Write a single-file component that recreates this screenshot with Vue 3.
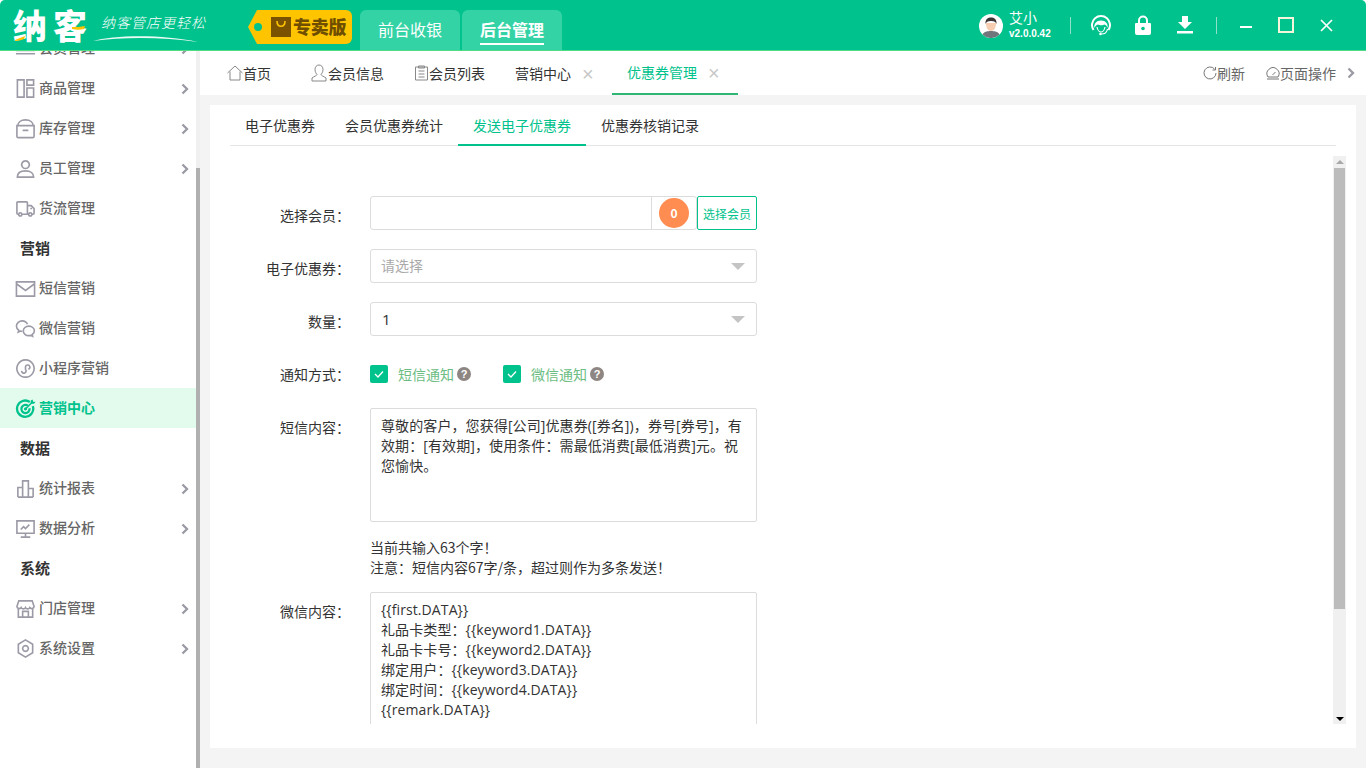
<script setup>
const icons = {
  member: ['M1 13h20M1 16.500h20M1 9h20'],
  goods: ['M2.500 2h7v18h-7zM12.500 2h7v5.500h-7zM12.500 10.500h7V20h-7z'],
  stock: ['M3 8c0-3.500 3-6 8-6s8 2.500 8 6M2 8h18v11a1.500 1.500 0 0 1-1.500 1.500h-15A1.500 1.500 0 0 1 2 19zM8 13h6'],
  staff: ['M11 3a4 4 0 1 1-.01 0M2.500 20c0-4 3-6.500 8.500-6.500s8.500 2.500 8.500 6.500z'],
  truck: ['M13 17V5a1 1 0 0 0-1-1H3a1 1 0 0 0-1 1v11a1 1 0 0 0 1 1h1M8 17h6M13 8h4l3 3v5a1 1 0 0 1-1 1h-1M5.500 15.500a1.700 1.700 0 1 0 .01 0M16 15.500a1.700 1.700 0 1 0 .01 0M16 11h2'],
  mail: ['M1.500 4h19v15h-19zM1.500 6l9.500 7 9.500-7'],
  wechat: ['M13 6.500C12 4 10 3 7.500 3 4.500 3 1.500 5.500 1.500 8.500c0 1.800 1 3.300 2.400 4.300l-.5 2 2.300-1.100c.6.2 1.200.3 1.800.3M14.500 8.500c-3.200 0-5.800 2.200-5.800 5s2.600 5 5.800 5c.7 0 1.300-.1 1.900-.3l2 1-.4-1.900c1.400-.9 2.300-2.300 2.300-3.800 0-2.800-2.600-5-5.800-5zM12.500 13h.1M16.500 13h.1M5.500 7h.1M9.500 7h.1'],
  mini: ['M11 2a9 9 0 1 1-.01 0M7 13.500a2.300 2.300 0 1 0 4-1.500V10a2.300 2.300 0 1 1 3 1.800'],
  chart: ['M3 20V10h5v10M8 20V3h6v17M14 20v-9h5v9M3 20h16'],
  screen: ['M2 3h18v13H2zM11 16v4M6 20h10M6 12l3-3 2 2 4-4'],
  store: ['M4 3h14l2 6a2.500 2.500 0 0 1-4.500 1 2.500 2.500 0 0 1-4.500 0 2.500 2.500 0 0 1-4.500 0A2.500 2.500 0 0 1 2 9zM3.500 10v10h15V10M8 20v-6h6v6'],
  gear: ['M11 2l7.500 4.500v9L11 20l-7.500-4.500v-9zM11 8a3 3 0 1 1-.01 0']
}

const menu = [
  { name: '会员管理', icon: 'member', arrow: true },
  { name: '商品管理', icon: 'goods', arrow: true },
  { name: '库存管理', icon: 'stock', arrow: true },
  { name: '员工管理', icon: 'staff', arrow: true },
  { name: '货流管理', icon: 'truck' },
  { title: '营销' },
  { name: '短信营销', icon: 'mail' },
  { name: '微信营销', icon: 'wechat' },
  { name: '小程序营销', icon: 'mini' },
  { name: '营销中心', active: true },
  { title: '数据' },
  { name: '统计报表', icon: 'chart', arrow: true },
  { name: '数据分析', icon: 'screen', arrow: true },
  { title: '系统' },
  { name: '门店管理', icon: 'store', arrow: true },
  { name: '系统设置', icon: 'gear', arrow: true }
]

const subTabs = ['电子优惠券', '会员优惠券统计', '发送电子优惠券', '优惠券核销记录']
const wxLines = ['{{first.DATA}}', '礼品卡类型：{{keyword1.DATA}}', '礼品卡卡号：{{keyword2.DATA}}', '绑定用户：{{keyword3.DATA}}', '绑定时间：{{keyword4.DATA}}', '{{remark.DATA}}']
</script>

<template>
  <div class="app">
    <header class="topbar">
      <div class="logo">
        <span class="logo-main">纳客</span>
        <svg class="logo-marks" viewBox="0 0 210 50">
          <path d="M15 40c3-1 7-3 10-4l-1 3c-3 1-6 2-9 2z" fill="#ffc400"/>
          <path d="M72 27c4 0 9 0 13-1l-1 3c-4 1-8 1-12 0z" fill="#ffc400"/>
          <path d="M93 41c20-6 70-7 105 1-35-5-75-5-105-1z" fill="#eafaf4"/>
        </svg>
        <span class="logo-slogan">纳客管店更轻松</span>
      </div>
      <div class="badge">
        <i class="badge-dot"></i>
        <svg class="bag" viewBox="0 0 20 20"><path d="M0 0h20v20H0z" fill="#7a5200"/><path d="M6 4c0 7 8 7 8 0" fill="none" stroke="#ffc400" stroke-width="1.600"/></svg>
        <span class="badge-text">专卖版</span>
      </div>
      <div class="mode-tab">前台收银</div>
      <div class="mode-tab current"><span>后台管理</span></div>

      <div class="top-right">
        <svg class="avatar" viewBox="0 0 24 24">
          <circle cx="12" cy="12" r="12" fill="#fff"/>
          <path d="M3.500 20.500c1.500-3 5-3.500 8.500-3.500s7 .5 8.500 3.500A12 12 0 0 1 3.500 20.500z" fill="#71757c"/>
          <path d="M7 9c0 5 2 8 5 8s5-3 5-8z" fill="#f6cdb0"/>
          <path d="M6.500 10C6 5 9 3.500 12 3.500s6 1.500 5.500 6.500c-.8-2-2-3-5.500-3S7.300 8 6.500 10z" fill="#3a3534"/>
        </svg>
        <div class="user">
          <span class="user-name">艾小</span>
          <span class="user-ver">v2.0.0.42</span>
        </div>
        <i class="sep first"></i>
        <svg class="t-icon headset" viewBox="0 0 20 22" fill="none" stroke="#fff">
          <path d="M2.500 15A9 9 0 1 1 17.500 15" stroke-width="2"/>
          <path d="M3.500 13c-1-4 2-7.500 6.500-7.500s7.500 3.500 6.500 7.500c-.5-2-1.500-3-3-3.500-1.500 1-5 1-6.500 0-1.500.5-3 1.500-3.500 3.500z" fill="#fff" stroke="none"/>
          <path d="M6 12c.5 3 2.500 5 4 5s3.500-2 4-5" stroke-width="1.200"/>
          <path d="M16.500 14c-.5 3-3 5-6 5" stroke-width="1.200"/>
          <circle cx="9.500" cy="19" r="1.300" fill="#fff" stroke="none"/>
        </svg>
        <svg class="t-icon lock" viewBox="0 0 16 20">
          <path d="M4 9V5.500a4 4 0 0 1 8 0V9" fill="none" stroke="#fff" stroke-width="2"/>
          <path d="M1 8h14a1 1 0 0 1 1 1v9a2 2 0 0 1-2 2H2a2 2 0 0 1-2-2V9a1 1 0 0 1 1-1z" fill="#fff"/>
          <circle cx="8" cy="13.500" r="1.800" fill="#00c28c"/>
        </svg>
        <svg class="t-icon down" viewBox="0 0 16 18" fill="#fff">
          <path d="M5 0h6v6h4l-7 7-7-7h4zM0 15h16v2.500H0z"/>
        </svg>
        <i class="sep"></i>
        <i class="win-min"></i>
        <i class="win-max"></i>
        <svg class="win-close" viewBox="0 0 13 13"><path d="M1 1l11 11M12 1L1 12" stroke="#fff" stroke-width="1.700"/></svg>
      </div>
    </header>

    <div class="main">
      <aside class="side">
        <nav class="menu">
          <template v-for="item in menu" :key="item.name || item.title">
            <div v-if="item.title" class="menu-title">{{ item.title }}</div>
            <div v-else :class="['menu-item', { active: item.active }]">
              <svg v-if="item.active" class="menu-icon" viewBox="0 0 22 22" fill="none" stroke="#00c28c" stroke-width="2.400">
                <path d="M15.500 4.200a8.500 8.500 0 1 0 3.200 4.300"/>
                <path d="M13.500 8a4.300 4.300 0 1 0 1.700 2.700"/>
                <circle cx="11" cy="11.500" r="1.200" fill="#00c28c" stroke-width="1"/>
                <path d="M11 11.500l7-7" stroke-width="1.600"/>
                <path d="M16.500 2.500v3.500H20l1.500-2H19l-.5-2.500z" fill="#00c28c" stroke="none"/>
              </svg>
              <svg v-else class="menu-icon" viewBox="0 0 22 22" fill="none" stroke="#9c9aa6" stroke-width="1.700">
                <path v-for="d in icons[item.icon]" :key="d" :d="d"/>
              </svg>
              <span class="menu-name">{{ item.name }}</span>
              <svg v-if="item.arrow" class="menu-arrow" viewBox="0 0 8 12" fill="none"><path d="M1.500 1.500L6 6l-4.500 4.500" stroke="#9a9aa4" stroke-width="2.300"/></svg>
            </div>
          </template>
        </nav>
        <div class="side-scroll"><div class="side-thumb"></div></div>
      </aside>

      <div class="content">
        <div class="page-tabs">
          <div class="page-tab home">
            <svg class="tab-icon" viewBox="0 0 16 16" fill="none" stroke="#888"><path d="M.500 8L8 1l7.500 7M3 6.500V15h10V6.500"/></svg>首页
          </div>
          <div class="page-tab">
            <svg class="tab-icon wide" viewBox="0 0 18 18" fill="none" stroke="#888"><path d="M9 1c2.500 0 4 2 4 4.500S11.500 10 11 10.500c0 1 3 2 5 3.500v3H2v-3c2-1.500 5-2.500 5-3.500C6.500 10 5 8 5 5.500S6.500 1 9 1z"/></svg>会员信息
          </div>
          <div class="page-tab">
            <svg class="tab-icon list" viewBox="0 0 15 16" fill="none" stroke="#888"><path d="M1.500 2h12v13h-12zM4.500 1h6v2h-6zM4.500 6h6M4.500 9h6M4.500 12h6"/></svg>会员列表
          </div>
          <div class="page-tab">营销中心<span class="tab-close">×</span></div>
          <div class="page-tab active">优惠券管理<span class="tab-close">×</span></div>
          <div class="page-actions">
            <span class="action">
              <svg class="tab-icon small" viewBox="0 0 14 14" fill="none" stroke="#777"><path d="M11.500 3a6 6 0 1 0 1.500 4M12.500 1v3h-3"/></svg>刷新
            </span>
            <span class="action">
              <svg class="tab-icon small" viewBox="0 0 14 14" fill="none" stroke="#777"><path d="M2 11a6 6 0 1 1 10 0zM6.500 9l3-3M1 13h12"/></svg>页面操作
            </span>
            <svg class="actions-arrow" viewBox="0 0 8 12" fill="none"><path d="M1.500 1.500L6 6l-4.500 4.500" stroke="#9a9aa4" stroke-width="2.300"/></svg>
          </div>
        </div>

        <div class="card-wrap">
          <section class="card">
            <div class="sub-tabs">
              <div v-for="t in subTabs" :key="t" :class="['sub-tab', { active: t === '发送电子优惠券' }]">{{ t }}</div>
            </div>
            <div class="scroll-area">
              <form class="form" @submit.prevent>
                <div class="row">
                  <label class="label">选择会员：</label>
                  <div class="member-input">
                    <div class="member-text"></div>
                    <div class="member-count"><span>0</span></div>
                  </div>
                  <button class="pick-btn" type="button">选择会员</button>
                </div>
                <div class="row">
                  <label class="label">电子优惠券：</label>
                  <div class="select placeholder"><span class="sel-text">请选择</span><i class="caret"></i></div>
                </div>
                <div class="row">
                  <label class="label">数量：</label>
                  <div class="select qty">1<i class="caret"></i></div>
                </div>
                <div class="row checks">
                  <label class="label">通知方式：</label>
                  <div class="check"><i class="box"><svg viewBox="0 0 18 18" fill="none"><path d="M5 9l3 3 5-5.500" stroke="#fff" stroke-width="1.300"/></svg></i><span class="sms">短信通知</span><i class="help">?</i></div>
                  <div class="check"><i class="box"><svg viewBox="0 0 18 18" fill="none"><path d="M5 9l3 3 5-5.500" stroke="#fff" stroke-width="1.300"/></svg></i><span>微信通知</span><i class="help">?</i></div>
                </div>
                <div class="row sms-row">
                  <label class="label">短信内容：</label>
                  <div class="textarea sms-text">尊敬的客户，您获得[公司]优惠券([券名])，券号[券号]，有效期：[有效期]，使用条件：需最低消费[最低消费]元。祝您愉快。</div>
                </div>
                <div class="tips">
                  <p>当前共输入63个字！</p>
                  <p>注意：短信内容67字/条，超过则作为多条发送！</p>
                </div>
                <div class="row">
                  <label class="label">微信内容：</label>
                  <div class="textarea wx-text">
                    <div v-for="l in wxLines" :key="l">{{ l }}</div>
                  </div>
                </div>
              </form>
              <div class="v-scroll">
                <span class="arrow-up"></span>
                <div class="v-thumb"></div>
                <span class="arrow-down"></span>
              </div>
            </div>
          </section>
        </div>
      </div>
    </div>
  </div>
</template>

<style>
html, body { margin: 0; background: #fff; }
</style>

<style scoped>
.app { width: 1366px; height: 768px; display: flex; flex-direction: column; overflow: hidden; font-family: "Noto Sans CJK SC", "Noto Sans", sans-serif; font-size: 14px; color: #333; }

.topbar { height: 50px; flex: none; display: flex; background: #00c28c; border-bottom: 1px solid #4fdc83; border-radius: 5px 5px 0 0; position: relative; z-index: 2; }
.logo { width: 248px; flex: none; position: relative; color: #fff; }
.logo-main { position: absolute; left: 13px; top: 5px; font-size: 34px; line-height: 40px; font-weight: 900; letter-spacing: 6px; }
.logo-marks { position: absolute; left: 0; top: 0; width: 210px; height: 50px; }
.logo-slogan { position: absolute; left: 101px; top: 12px; font-size: 14px; line-height: 20px; font-weight: 300; font-style: italic; letter-spacing: 1px; }
.badge { width: 104px; height: 34px; margin-top: 10px; padding-left: 6px; box-sizing: border-box; display: flex; align-items: center; background: #ffc400; border-radius: 6px; clip-path: polygon(9px 0, 100% 0, 100% 100%, 9px 100%, 0 50%); color: #6f4e00; font-size: 18px; font-weight: 900; }
.badge-dot { width: 8px; height: 8px; border-radius: 50%; background: #00c28c; }
.bag { width: 20px; height: 20px; margin-left: 9px; margin-right: 2px; }
.badge-text { margin-bottom: 2px; letter-spacing: -.3px; }
.mode-tab { width: 100px; height: 40px; margin: 10px 0 0 8px; box-sizing: border-box; padding-top: 7px; text-align: center; background: #34d3a6; border-radius: 6px 6px 0 0; color: #fff; font-size: 16px; line-height: 24px; }
.mode-tab + .mode-tab { margin-left: 2px; }
.mode-tab.current { font-weight: 700; }
.mode-tab.current span { display: inline-block; height: 26px; border-bottom: 2px solid #fff; }

.top-right { margin-left: auto; display: flex; align-items: center; }
.avatar { width: 24px; height: 24px; margin-top: 1px; }
.user { margin-left: 6px; width: 61px; display: flex; flex-direction: column; color: #fff; }
.user-name { font-size: 14px; line-height: 18px; }
.user-ver { font-size: 10px; line-height: 16px; font-weight: 700; font-family: "Liberation Sans", sans-serif; }
.sep { width: 1px; height: 17px; background: #8fe2c9; margin-left: 23px; }
.sep.first { margin-left: 0; }
.t-icon { display: block; }
.headset { width: 20px; height: 22px; margin-left: 20px; margin-top: 2px; }
.lock { width: 16px; height: 20px; margin-left: 24px; }
.down { width: 16px; height: 18px; margin-left: 26px; }
.win-min { width: 12px; height: 2px; background: #fff; margin: 3px 0 0 23px; }
.win-max { width: 16px; height: 16px; box-sizing: border-box; border: 2px solid #f5f5dc; margin-left: 26px; }
.win-close { width: 13px; height: 13px; margin: 0 33px 0 26px; }

.main { flex: 1; display: flex; min-height: 0; }
.side { width: 200px; flex: none; display: flex; overflow: hidden; }
.menu { width: 196px; flex: none; margin-top: -23px; }
.menu-item { height: 40px; display: flex; align-items: center; padding-left: 15px; color: #666; font-weight: 500; }
.menu-item.active { background: #e2fbec; color: #00c28c; font-weight: 700; }
.menu-icon { width: 21px; height: 21px; flex: none; margin-right: 3px; }
.menu-name { margin-bottom: 2px; }
.menu-arrow { width: 8px; height: 12px; margin-left: auto; margin-right: 7px; margin-top: 2px; }
.menu-title { height: 40px; line-height: 40px; padding-left: 20px; font-size: 15px; font-weight: 700; color: #333; }
.side-scroll { width: 4px; flex: none; background: #f0f0f0; display: flex; flex-direction: column; }
.side-thumb { margin-top: 117px; flex: 1; background: #b0b0b0; }

.content { flex: 1; min-width: 0; display: flex; flex-direction: column; background: #f4f4f4; }
.page-tabs { height: 44px; flex: none; display: flex; padding-left: 12px; background: #fff; color: #333; }
.page-tab { height: 44px; box-sizing: border-box; padding: 0 15px; display: flex; align-items: center; white-space: nowrap; }
.page-tab.home { margin-right: 9px; }
.page-tab.active { color: #00c28c; border-bottom: 2px solid #2fb574; }
.tab-icon { width: 16px; height: 16px; flex: none; }
.tab-icon.wide { width: 18px; height: 18px; }
.tab-icon.list { width: 15px; }
.tab-icon.small { width: 14px; height: 14px; }
.tab-close { width: 15px; margin: 2px 0 0 11px; color: #c8c8c8; font-size: 20px; line-height: 20px; font-weight: 300; font-family: "Liberation Sans", sans-serif; }
.page-actions { margin-left: auto; display: flex; align-items: center; color: #666; padding-right: 11px; }
.action { display: flex; align-items: center; margin-left: 21px; }
.actions-arrow { width: 8px; height: 12px; margin-left: 11px; }

.card-wrap { flex: 1; min-height: 0; padding: 10px 10px 20px; }
.card { height: 643px; background: #fff; display: flex; flex-direction: column; }
.sub-tabs { height: 41px; box-sizing: border-box; flex: none; margin: 0 20px; display: flex; border-bottom: 1px solid #e6e6e6; }
.sub-tab { height: 41px; box-sizing: border-box; padding: 0 15px; line-height: 41px; color: #333; }
.sub-tab.active { color: #00c28c; border-bottom: 2px solid #00c28c; }

.scroll-area { height: 568px; margin-top: 10px; margin-right: 10px; display: flex; overflow: hidden; }
.form { flex: 1; padding-top: 40px; min-width: 0; }
.row { display: flex; margin-bottom: 19px; }
.label { width: 140px; height: 34px; margin-right: 20px; flex: none; text-align: right; font-size: 14px; line-height: 38px; color: #333; }
.member-input { width: 327px; height: 34px; box-sizing: border-box; display: flex; border: 1px solid #dcdcdc; border-radius: 3px; }
.member-text { flex: 1; border-right: 1px solid #dcdcdc; }
.member-count { width: 44px; display: flex; align-items: center; }
.member-count span { width: 30px; height: 30px; margin-left: 7px; border-radius: 50%; background: #ff8c50; color: #fff; font-size: 12px; font-weight: 700; line-height: 30px; text-align: center; }
.pick-btn { width: 60px; height: 34px; padding: 0; flex: none; background: #fff; border: 1px solid #00c28c; border-radius: 2px; color: #00c28c; font-family: inherit; font-size: 12px; }
.select { width: 387px; height: 34px; box-sizing: border-box; padding: 0 10px; border: 1px solid #dcdcdc; border-radius: 3px; display: flex; align-items: center; justify-content: space-between; color: #333; }
.select.placeholder { color: #aaa; }
.sel-text { margin-bottom: 2px; }
.select.qty { font-family: "Open Sans", sans-serif; font-size: 15px; padding-left: 11px; }
.caret { width: 0; height: 0; margin-right: 1px; border: 7px solid transparent; border-top: 7px solid #c4c4c4; border-bottom: 0; }
.checks { height: 18px; margin: 29px 0 25px; align-items: center; }
.checks .label { height: 18px; line-height: 18px; }
.check { display: flex; align-items: center; margin-right: 32px; color: #6cbd83; }
.box { width: 18px; height: 18px; margin-right: 10px; border-radius: 2px; background: #00c28c; display: block; }
.box svg { display: block; }
.help { width: 14px; height: 14px; margin-left: 3px; border-radius: 50%; background: #8d8682; color: #fff; font-size: 11px; font-weight: 700; font-style: normal; line-height: 14px; text-align: center; font-family: "Liberation Sans", sans-serif; }
.sms-row { margin-bottom: 15px; }
.textarea { width: 387px; box-sizing: border-box; padding: 7px 10px; border: 1px solid #dcdcdc; border-radius: 2px; font-family: "Open Sans", "Noto Sans CJK SC", sans-serif; font-size: 14px; line-height: 20px; letter-spacing: .1px; color: #333; }
.sms-text { height: 114px; }
.wx-text { height: 160px; }
.tips { margin: 0 0 15px 160px; font-size: 14px; line-height: 20px; color: #333; }
.tips p { margin: 0; }
.v-scroll { width: 13px; flex: none; background: #f0f0f0; display: flex; flex-direction: column; align-items: center; }
.arrow-up { width: 0; height: 0; margin-top: 4px; border: 4px solid transparent; border-bottom: 4px solid #a8a8a8; border-top: 0; }
.v-thumb { width: 11px; height: 441px; margin-top: 4px; background: #bcbcbc; }
.arrow-down { width: 0; height: 0; margin-top: auto; margin-bottom: 3px; border: 4px solid transparent; border-top: 4px solid #000; border-bottom: 0; }
</style>
